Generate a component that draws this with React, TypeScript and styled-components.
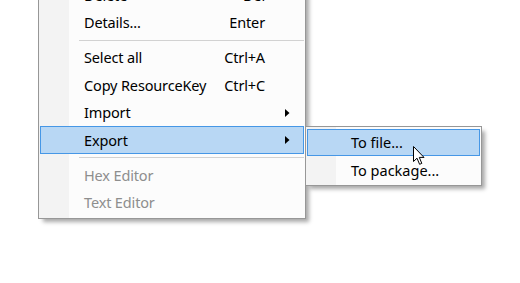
import React from "react";
import styled, { createGlobalStyle } from "styled-components";

const GlobalStyle = createGlobalStyle`
  html, body {
    margin: 0;
    padding: 0;
    background: #ffffff;
  }
  body {
    font-family: "Noto Sans", "Open Sans", "Liberation Sans", sans-serif;
    font-size: 14.5px;
    letter-spacing: -0.15px;
    color: #000;
  }
`;

const Page = styled.div`
  position: relative;
  width: 520px;
  height: 283px;
  overflow: hidden;
  box-sizing: border-box;
  padding-left: 38px;
  background: #ffffff;
`;

const Menu = styled.div<{ $width: number; $offsetTop?: number }>`
  position: relative;
  box-sizing: border-box;
  width: ${(p) => p.$width}px;
  margin-top: ${(p) => p.$offsetTop ?? 0}px;
  border: 1px solid #979797;
  padding: 1.5px 1px;
  background: linear-gradient(to right, #f3f3f3 0 30px, #fcfcfc 30px);
  box-shadow: 4px 4px 4px -1px rgba(0, 0, 0, 0.34);
  display: flex;
  flex-direction: column;
`;

const Item = styled.div<{ $active?: boolean; $disabled?: boolean }>`
  position: relative;
  box-sizing: border-box;
  height: 27.5px;
  display: grid;
  grid-template-columns: 1fr auto 38px;
  align-items: center;
  padding-left: 43px;
  border: 1px solid ${(p) => (p.$active ? "#4697e6" : "transparent")};
  background: ${(p) => (p.$active ? "#b8d7f4" : "transparent")};
  color: ${(p) => (p.$disabled ? "#8e8e8e" : "#000000")};
  white-space: nowrap;
  line-height: 1;
`;

const Label = styled.span`
  display: block;
`;

const Shortcut = styled.span`
  display: block;
  text-align: right;
`;

const ArrowCell = styled.span`
  display: flex;
  align-items: center;
  padding-left: 20px;
`;

const Separator = styled.div`
  height: 7.5px;
  display: flex;
  align-items: center;
  padding-left: 39px;

  &::after {
    content: "";
    display: block;
    flex: 1;
    height: 1px;
    background: #d2d2d2;
  }
`;

const SubMenuWrap = styled.div`
  position: absolute;
  left: calc(100% + 2px);
  top: -1px;
  z-index: 2;
  letter-spacing: 0;
`;

const Cursor = styled.svg`
  position: absolute;
  left: 413px;
  top: 146px;
  z-index: 5;
`;

const Arrow = () => (
  <svg width="5" height="8" viewBox="0 0 5 8">
    <polygon points="0,0 4.5,4 0,8" fill="#000" />
  </svg>
);

type Entry =
  | { kind: "sep" }
  | {
      kind: "item";
      label: string;
      shortcut?: string;
      sub?: boolean;
      active?: boolean;
      disabled?: boolean;
    };

const mainEntries: Entry[] = [
  { kind: "item", label: "Delete", shortcut: "Del" },
  { kind: "item", label: "Details...", shortcut: "Enter" },
  { kind: "sep" },
  { kind: "item", label: "Select all", shortcut: "Ctrl+A" },
  { kind: "item", label: "Copy ResourceKey", shortcut: "Ctrl+C" },
  { kind: "item", label: "Import", sub: true },
  { kind: "item", label: "Export", sub: true, active: true },
  { kind: "sep" },
  { kind: "item", label: "Hex Editor", disabled: true },
  { kind: "item", label: "Text Editor", disabled: true },
];

const subEntries = [
  { label: "To file...", active: true },
  { label: "To package...", active: false },
];

const SubMenu = () => (
  <SubMenuWrap>
    <Menu $width={177}>
      {subEntries.map((e) => (
        <Item key={e.label} $active={e.active}>
          <Label>{e.label}</Label>
          <Shortcut />
          <ArrowCell />
        </Item>
      ))}
    </Menu>
  </SubMenuWrap>
);

export default function App() {
  return (
    <>
      <GlobalStyle />
      <Page>
        <Menu $width={268} $offsetTop={-21.25}>
          {mainEntries.map((e, i) =>
            e.kind === "sep" ? (
              <Separator key={i} />
            ) : (
              <Item key={i} $active={e.active} $disabled={e.disabled}>
                <Label>{e.label}</Label>
                <Shortcut>{e.shortcut ?? ""}</Shortcut>
                <ArrowCell>{e.sub ? <Arrow /> : null}</ArrowCell>
                {e.active ? <SubMenu /> : null}
              </Item>
            )
          )}
        </Menu>
        <Cursor width="13" height="20" viewBox="0 0 13 20">
          <path
            d="M0.5 0.5 L0.5 15.5 L4 12.2 L6.6 18.3 L8.8 17.4 L6.3 11.4 L11 11.4 Z"
            fill="#ffffff"
            stroke="#000000"
            strokeWidth="1"
            strokeLinejoin="miter"
          />
        </Cursor>
      </Page>
    </>
  );
}
